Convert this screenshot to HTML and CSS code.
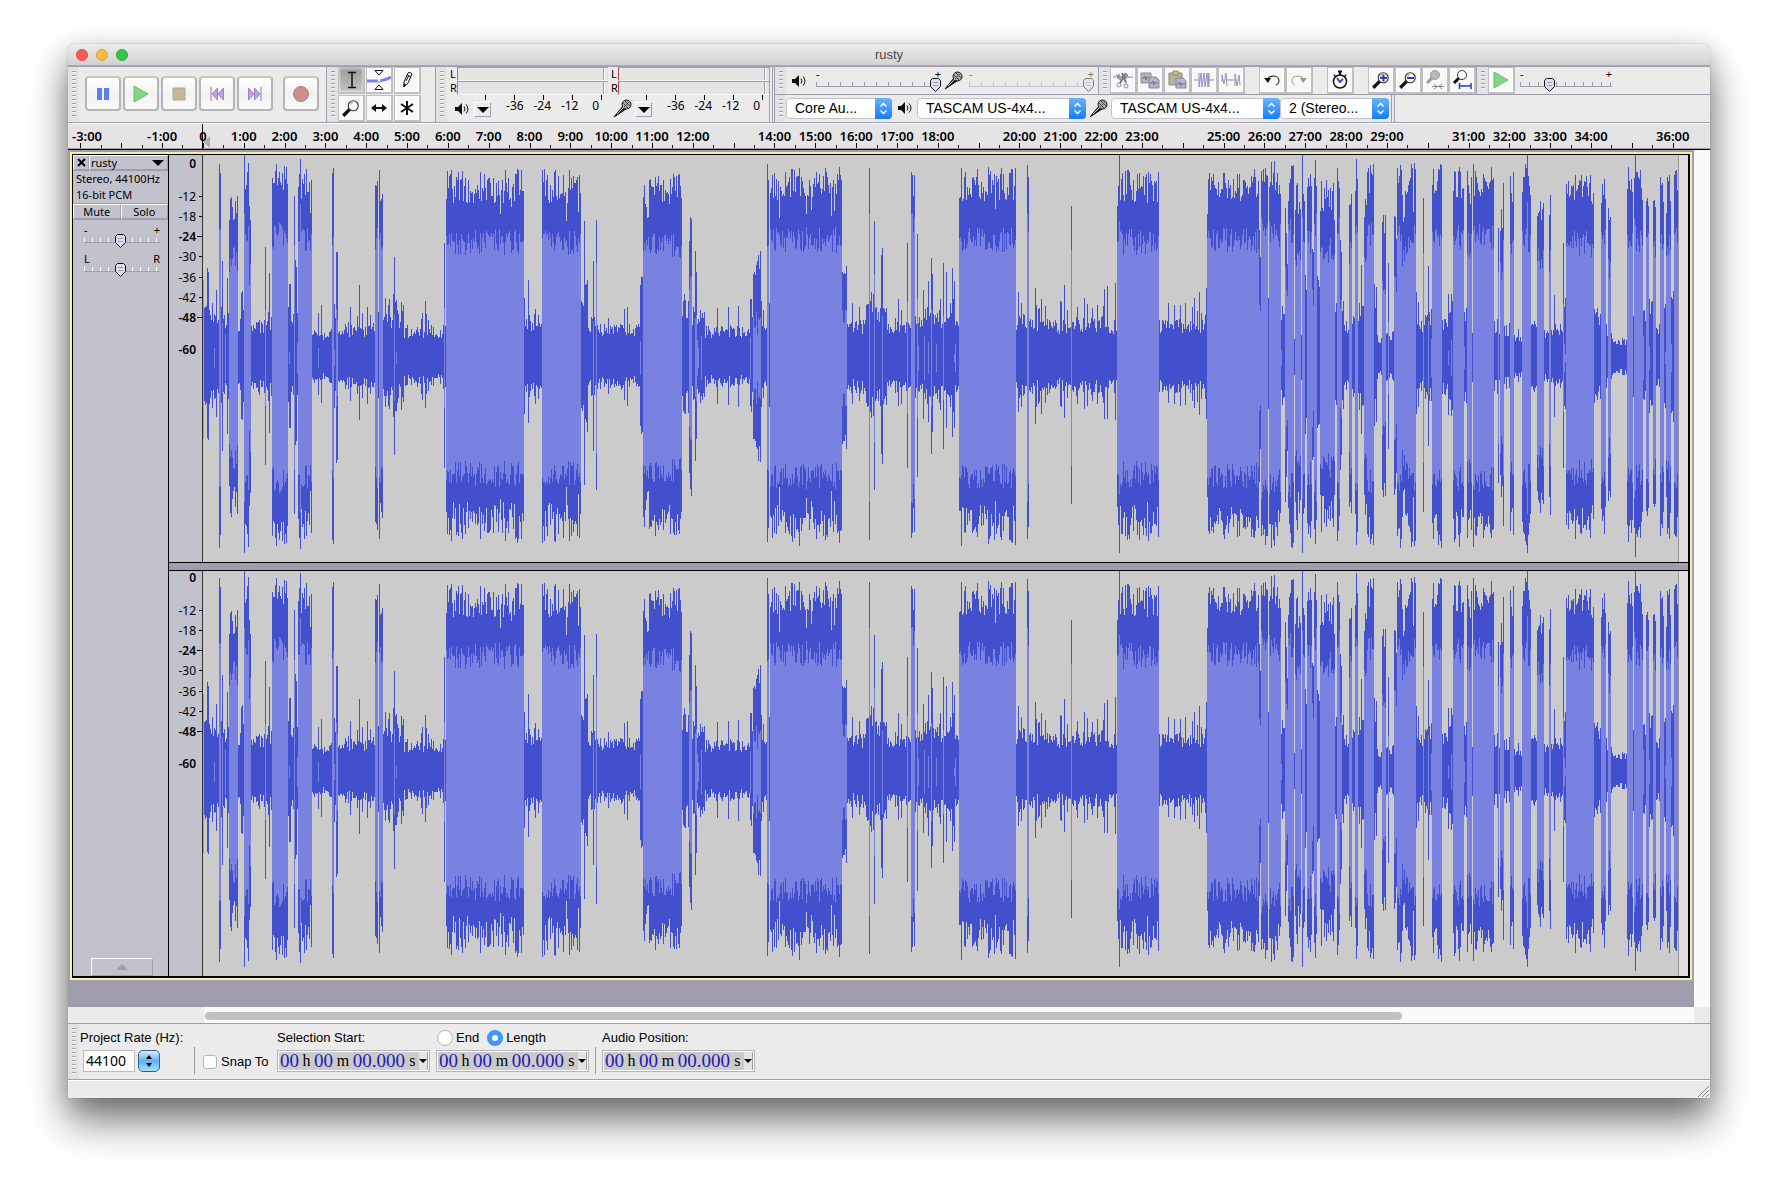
FILE: index.html
```html
<!DOCTYPE html>
<html lang="en">
<head>
  <meta charset="utf-8">
  <title>rusty</title>
  <link rel="stylesheet" href="styles.css">
</head>
<body>
  <svg class="symbols" aria-hidden="true">
    <symbol id="i-speaker" viewBox="0 0 14 12">
      <path d="M0 4h3l4-4v12L3 8H0z" fill="#111"/>
      <path d="M9 3.500q2 2.500 0 5M11 1.500q4 4.500 0 9" fill="none" stroke="#111"/>
    </symbol>
    <symbol id="i-mic" viewBox="0 0 19 19">
      <path d="M1 18L10 7l3 3z" fill="#222" stroke="#111"/>
      <circle cx="13.500" cy="5.500" r="4.500" fill="#aaa" stroke="#111"/>
      <path d="M10 4l5 5M12 2l5 5M11 8l5-5" stroke="#444" fill="none"/>
      <path d="M4 15l7-7" stroke="#ccc"/>
    </symbol>
    <symbol id="i-lens" viewBox="0 0 18 18">
      <path d="M2 16l6-6" stroke="#111" stroke-width="3"/>
      <circle cx="11" cy="7" r="4.500" fill="#fff" stroke="#333"/>
      <path d="M8.500 6q.5-2 2.500-2" fill="none" stroke="#999"/>
    </symbol>
    <symbol id="i-wave" viewBox="0 0 20 20">
      <path d="M0 10h3l1-2 1 4 1-5 1 6 1-4 1 2 1-4 1 5 1-3 1 3 1-5 1 4 1-1h4" fill="none" stroke="#8b8b98"/>
    </symbol>
  </svg>

  <main class="window">
    <header class="titlebar">
      <div class="lights">
        <button class="light red" aria-label="Close"></button>
        <button class="light yellow" aria-label="Minimize"></button>
        <button class="light green" aria-label="Zoom"></button>
      </div>
      <h1>rusty</h1>
    </header>

    <div class="toolbars">
      <div class="bar transport">
        <span class="grip"></span>
        <div class="transport-buttons">
          <button class="big" aria-label="Pause"><svg width="16" height="16"><path d="M2 2h5v12H2zM9 2h5v12H9z" fill="#5b80ee"/></svg></button>
          <button class="big" aria-label="Play"><svg width="16" height="16"><path d="M1 0l14 8-14 8z" fill="#83d683" stroke="#6fba72"/></svg></button>
          <button class="big" aria-label="Stop"><svg width="16" height="16"><path d="M2 2h12v12H2z" fill="#c3b69b" stroke="#b5a88c"/></svg></button>
          <button class="big" aria-label="Skip to start"><svg width="16" height="16"><path d="M2 1v14" stroke="#8f7aa8"/><path d="M8.500 2v12L3 8zM14.500 2v12L9 8z" fill="#bfa1e3" stroke="#9d83bc"/></svg></button>
          <button class="big" aria-label="Skip to end"><svg width="16" height="16"><path d="M14 1v14" stroke="#8f7aa8"/><path d="M1.500 2v12L7 8zM7.500 2v12L13 8z" fill="#bfa1e3" stroke="#9d83bc"/></svg></button>
          <button class="big record" aria-label="Record"><svg width="16" height="16"><circle cx="8" cy="8" r="7.500" fill="#cc8f90" stroke="#b27c7e"/></svg></button>
        </div>
      </div>

      <div class="bar tools">
        <span class="grip"></span>
        <div class="tool-grid">
          <button class="tool pressed" aria-label="Selection tool"><svg width="20" height="20"><path d="M7 2.500h3.500l.5.5.5-.5H15M7 17.500h3.500l.5-.5.5.5H15M11 3v14" fill="none" stroke="#111" stroke-width="1.500"/></svg></button>
          <button class="tool" aria-label="Envelope tool"><svg width="24" height="22"><path d="M0 12h10q6 0 14-4" fill="none" stroke="#7982e0" stroke-width="3"/><path d="M8 1.500h8L12 6zM8 20.500h8L12 16z" fill="#fff" stroke="#111"/><circle cx="12" cy="11" r="1.500" fill="#fff"/></svg></button>
          <button class="tool" aria-label="Draw tool"><svg width="20" height="20"><path d="M7 17l0-5 4-9q2-2 4 1l-4 9z" fill="#fff" stroke="#111"/><path d="M7 17v-3l2 1zM10 5l4 2M9 11l3-6" stroke="#111" fill="#111"/></svg></button>
          <button class="tool" aria-label="Zoom tool"><svg width="20" height="20"><use href="#i-lens"/></svg></button>
          <button class="tool" aria-label="Time shift tool"><svg width="20" height="20"><path d="M3 10h14" stroke="#111" stroke-width="2"/><path d="M2 10l5-4v8zM18 10l-5-4v8z" fill="#111"/></svg></button>
          <button class="tool" aria-label="Multi tool"><svg width="20" height="20"><path d="M10 3v14M4 6l12 8M16 6L4 14" stroke="#111" stroke-width="2"/></svg></button>
        </div>
      </div>

      <div class="bar meters">
        <span class="grip"></span>
        <div class="meter playback">
          <div class="level"><span>L</span><i></i></div>
          <div class="level"><span>R</span><i></i></div>
          <div class="scale">
            <svg width="14" height="12"><use href="#i-speaker"/></svg>
            <button class="drop" aria-label="Playback meter options"></button>
            <span>-36</span><span>-24</span><span>-12</span><span class="zero">0</span>
          </div>
        </div>
        <div class="meter recording">
          <div class="level"><span>L</span><i></i></div>
          <div class="level"><span>R</span><i></i></div>
          <div class="scale">
            <svg class="mic" width="19" height="19"><use href="#i-mic"/></svg>
            <button class="drop" aria-label="Recording meter options"></button>
            <span>-36</span><span>-24</span><span>-12</span><span class="zero">0</span>
          </div>
        </div>
      </div>

      <div class="stack">
        <div class="row">
          <div class="bar mixer">
            <span class="grip"></span>
            <svg class="speaker" width="14" height="12"><use href="#i-speaker"/></svg>
            <label class="slider"><span>-</span><span>+</span><input type="range" value="100" aria-label="Playback volume"></label>
            <svg class="mic" width="19" height="19"><use href="#i-mic"/></svg>
            <label class="slider off"><span>-</span><span>+</span><input type="range" value="100" aria-label="Recording volume" disabled></label>
          </div>
          <div class="bar edit">
            <span class="grip"></span>
            <button class="tool" aria-label="Cut"><svg width="20" height="20"><use href="#i-wave" y="-3"/><path d="M7 13L13 3M13 13L9 3" stroke="#777" stroke-width="2"/><circle cx="6" cy="15" r="2" fill="none" stroke="#8a8ab5"/><circle cx="13" cy="16" r="2" fill="none" stroke="#8a8ab5"/></svg></button>
            <button class="tool" aria-label="Copy"><svg width="20" height="20"><path d="M1 3h10v10H1z" fill="#b5b5b5" stroke="#8f8f8f"/><path d="M9 7h7l3 3v8H9z" fill="#b4b4cb" stroke="#8484a4"/><path d="M2 8h2l1-2 1 4 1-3 1 1M10 13h2l1-2 1 4 1-3 1 1h2" fill="none" stroke="#777"/></svg></button>
            <button class="tool" aria-label="Paste"><svg width="20" height="20"><path d="M2 3h13v12H2z" fill="#b5b296" stroke="#8c8a74"/><path d="M6 1h5v4H6z" fill="#c9c478" stroke="#8c8a74"/><path d="M9 8h7l3 3v7H9z" fill="#b4b4cb" stroke="#8484a4"/><path d="M10 14h2l1-2 1 4 1-3 1 1h2" fill="none" stroke="#777"/></svg></button>
            <button class="tool" aria-label="Trim"><svg width="20" height="20"><path d="M0 10h5M15 10h5" stroke="#8b8b98"/><path d="M5 3v14l2-14 1 14L10 3l1 14 2-14 1 14 1-14v14" fill="none" stroke="#9292bd"/></svg></button>
            <button class="tool" aria-label="Silence"><svg width="20" height="20"><path d="M1 12V5l2 9 2-11 1 13M14 16V4l2 12 2-11 1 10" fill="none" stroke="#9292bd"/><path d="M6 10h8" stroke="#8b8b98"/></svg></button>
            <button class="tool gap" aria-label="Undo"><svg width="20" height="20"><path d="M5 10q1-4 6-4 6 0 6 5 0 3-3 4" fill="none" stroke="#111"/><path d="M2 8l4 5 3-5z" fill="#111"/></svg></button>
            <button class="tool" aria-label="Redo"><svg width="20" height="20"><path d="M15 10q-1-4-6-4-6 0-6 5 0 3 3 4" fill="none" stroke="#999"/><path d="M18 8l-4 5-3-5z" fill="#999"/></svg></button>
            <button class="tool gap" aria-label="Sync-lock"><svg width="20" height="20"><circle cx="10" cy="11.500" r="6.500" fill="#fff" stroke="#111" stroke-width="1.500"/><path d="M8 1.500h4M10 1v4M15 5l1 1M4 5l1 1" stroke="#111" stroke-width="2"/><path d="M7 8l3 4 3-3" fill="none" stroke="#3546c5" stroke-width="2"/></svg></button>
            <button class="tool gap" aria-label="Zoom in"><svg width="20" height="20"><use href="#i-lens"/><path d="M9 8h7M12.500 4.500v7" stroke="#2b3bb0" stroke-width="2"/></svg></button>
            <button class="tool" aria-label="Zoom out"><svg width="20" height="20"><use href="#i-lens"/><path d="M9 8h7" stroke="#2b3bb0" stroke-width="2"/></svg></button>
            <button class="tool" aria-label="Fit selection"><svg width="20" height="20"><path d="M2 13l5-5" stroke="#999" stroke-width="3"/><circle cx="10" cy="5" r="4.500" fill="#bbb" stroke="#999"/><path d="M7 16.500h12M9 14l3 2.500L9 19M17 14l-3 2.500 3 2.500" fill="none" stroke="#888"/></svg></button>
            <button class="tool" aria-label="Fit project"><svg width="20" height="20"><path d="M2 13l5-5" stroke="#111" stroke-width="3"/><circle cx="10" cy="5" r="4.500" fill="#fff" stroke="#333"/><path d="M7.500 13v6M19 13v6M8 16h11" stroke="#2b3bb0" stroke-width="1.500"/></svg></button>
          </div>
          <div class="bar transcription">
            <span class="grip"></span>
            <button class="tool" aria-label="Play at speed"><svg width="16" height="16"><path d="M1 0l14 8-14 8z" fill="#83d683" stroke="#6fba72"/></svg></button>
            <label class="slider speed"><span>-</span><span>+</span><input type="range" value="30" aria-label="Playback speed"></label>
          </div>
        </div>
        <div class="row">
          <div class="bar device">
            <span class="grip"></span>
            <span class="select host"><select aria-label="Audio host"><option>Core Au...</option></select></span>
            <svg class="speaker" width="14" height="12"><use href="#i-speaker"/></svg>
            <span class="select out"><select aria-label="Output device"><option>TASCAM US-4x4...</option></select></span>
            <svg class="mic" width="19" height="19"><use href="#i-mic"/></svg>
            <span class="select out"><select aria-label="Input device"><option>TASCAM US-4x4...</option></select></span>
            <span class="select channels"><select aria-label="Input channels"><option>2 (Stereo...</option></select></span>
          </div>
          <span class="bar-end"></span>
        </div>
      </div>
    </div>

    <div class="timeline">
      <div class="minutes" id="minutes"></div>
      <span class="playhead"></span>
    </div>

    <div class="workspace">
      <section class="track">
        <aside class="panel">
          <div class="track-title">
            <button class="close" aria-label="Close track"><svg width="9" height="9"><path d="M1 1l7 7M8 1L1 8" stroke="#000" stroke-width="2"/></svg></button>
            <button class="name">rusty<i></i></button>
          </div>
          <p class="format">Stereo, 44100Hz<br>16-bit PCM</p>
          <div class="mute-solo"><button>Mute</button><button>Solo</button></div>
          <label class="slider wide"><span>-</span><span>+</span><input type="range" value="48" aria-label="Gain"></label>
          <label class="slider wide pan"><span>L</span><span>R</span><input type="range" value="48" aria-label="Pan"></label>
          <button class="collapse" aria-label="Collapse track"><i></i></button>
        </aside>
        <div class="channels-view">
          <div class="channel">
            <div class="db">
              <b class="top">0</b><div class="steps"><span>-12</span><span>-18</span><b>-24</b><span>-30</span><span>-36</span><span>-42</span><b>-48</b></div><b class="floor">-60</b>
            </div>
            <svg class="wave" viewBox="0 0 1485 407" preserveAspectRatio="none"></svg>
          </div>
          <div class="channel">
            <div class="db">
              <b class="top">0</b><div class="steps"><span>-12</span><span>-18</span><b>-24</b><span>-30</span><span>-36</span><span>-42</span><b>-48</b></div><b class="floor">-60</b>
            </div>
            <svg class="wave" viewBox="0 0 1485 407" preserveAspectRatio="none"></svg>
          </div>
        </div>
      </section>
      <div class="vscroll"></div>
    </div>
    <div class="hscroll"><div class="rail"><i></i></div></div>

    <footer class="selection">
      <span class="grip"></span>
      <div class="field rate">
        <label for="rate">Project Rate (Hz):</label>
        <div class="line"><input id="rate" type="text" value="44100"><button class="stepper" aria-label="Choose rate"><svg width="8" height="14"><path d="M1 5h6L4 1zM1 9h6l-3 4z"/></svg></button></div>
      </div>
      <span class="divider"></span>
      <label class="snap"><input type="checkbox"> Snap To</label>
      <div class="field">
        <span class="caption">Selection Start:</span>
        <div class="time"><input value="00" aria-label="Start hours"><span>h</span><input value="00" aria-label="Start minutes"><span>m</span><input class="sec" value="00.000" aria-label="Start seconds"><span>s</span><button aria-label="Start format"></button></div>
      </div>
      <div class="field">
        <div class="caption radios"><label><input type="radio" name="mode"> End</label><label><input type="radio" name="mode" checked> Length</label></div>
        <div class="time"><input value="00" aria-label="Length hours"><span>h</span><input value="00" aria-label="Length minutes"><span>m</span><input class="sec" value="00.000" aria-label="Length seconds"><span>s</span><button aria-label="Length format"></button></div>
      </div>
      <span class="divider tight"></span>
      <div class="field">
        <span class="caption">Audio Position:</span>
        <div class="time"><input value="00" aria-label="Position hours"><span>h</span><input value="00" aria-label="Position minutes"><span>m</span><input class="sec" value="00.000" aria-label="Position seconds"><span>s</span><button aria-label="Position format"></button></div>
      </div>
    </footer>
    <div class="status"><svg width="12" height="12"><path d="M1 12L12 1M5 12l7-7M9 12l3-3" stroke="#888"/></svg></div>
  </main>
  <script src="track.js"></script>
</body>
</html>
```
FILE: styles.css
```css
* {
  box-sizing: border-box;
}

body {
  margin: 0;
  padding: 44px 68px 93px;
  background: #fff;
  font-family: "Liberation Sans", Arial, sans-serif;
  font-size: 13px;
  color: #000;
}

button, input, select {
  font: inherit;
  color: inherit;
  margin: 0;
  padding: 0;
  border: 0;
  outline: none;
}

svg {
  display: block;
  flex: none;
}

.symbols {
  position: absolute;
  width: 0;
  height: 0;
}

.window {
  background: #ebebeb;
  border-radius: 6px 6px 0 0;
  box-shadow: 0 0 1px rgba(0, 0, 0, 0.5), 0 24px 40px rgba(0, 0, 0, 0.5), 0 6px 24px rgba(0, 0, 0, 0.2);
}

/* title bar */
.titlebar {
  position: relative;
  height: 22px;
  border-radius: 6px 6px 0 0;
  background: linear-gradient(#ececec, #d2d2d2);
  border-bottom: 1px solid #a9a9b0;
}

.titlebar h1 {
  margin: 0;
  font-size: 13px;
  font-weight: 400;
  line-height: 22px;
  text-align: center;
  color: #4a4a4a;
}

.lights {
  position: absolute;
  top: 5px;
  left: 8px;
  display: flex;
  gap: 8px;
}

.light {
  width: 12px;
  height: 12px;
  border-radius: 50%;
}

.red { background: #fc5b57; border: 1px solid #df4744; }
.yellow { background: #fdbc40; border: 1px solid #de9f34; }
.green { background: #34c84a; border: 1px solid #27aa35; }

/* toolbars */
.toolbars {
  display: flex;
  height: 57px;
  border-top: 1px solid #a09eae;
  border-bottom: 1px solid #a09eae;
}

.bar {
  display: flex;
  align-items: center;
  border-right: 1px solid #a09eae;
}

.grip {
  flex: none;
  align-self: stretch;
  width: 11px;
  border: solid #e2e2e2;
  border-width: 4px 3px 4px 4px;
  background: repeating-linear-gradient(#a09eae 0 1px, #f6f6f6 1px 2px, #e2e2e2 2px 4px) content-box #e2e2e2;
}

.transport-buttons {
  display: flex;
  gap: 2px;
  padding: 0 7px 2px 6px;
}

.big {
  display: grid;
  place-items: center;
  width: 36px;
  height: 35px;
  border: 2px solid #b5b5b5;
  border-top-color: #c8c8c8;
  border-radius: 4px;
  background: linear-gradient(#fff, #f2f2f2 50%, #fafafa);
}

.record {
  margin-left: 8px;
}

.tool-grid {
  display: grid;
  grid-template-columns: repeat(3, 27px);
  gap: 1px;
  margin-right: 14px;
}

.tool {
  display: grid;
  place-items: center;
  width: 27px;
  height: 27px;
  border: solid #c0c0c0;
  border-width: 1px 2px 2px 1px;
  background: #f8f8f8;
  box-shadow: inset 0 0 3px #fff;
}

.pressed {
  background: linear-gradient(#999, #c4c4c4);
}

.meters {
  align-items: flex-start;
  border-right: 4px double #a09eae;
}

.meter {
  width: 161px;
  padding-left: 3px;
}

.level {
  display: flex;
  height: 14px;
  font: 11px/14px "Noto Sans", sans-serif;
}

.level span {
  width: 7px;
}

.level i {
  flex: 1;
  border-top: 1px solid #a09eae;
  border-left: 1px solid #4caf50;
  border-bottom: 1px solid #f8f8f8;
  background: linear-gradient(to left, #e4e4e4 3px, #fff 3px 4px, #a09eae 4px 5px, #e4e4e4 5px);
}

.recording .level i {
  border-left-color: #b04444;
}

.scale {
  display: flex;
  align-items: center;
  height: 27px;
  margin-left: 7px;
  background: repeating-linear-gradient(to right, transparent 0 28px, #000 28px 29px) 0 0 / 146px 5px no-repeat;
  font: 12px/14px "Noto Sans", sans-serif;
}

.scale span {
  width: 29px;
  padding-bottom: 5px;
  text-align: center;
}

.scale .zero {
  width: 26px;
}

.scale svg {
  margin-left: -2px;
}

.scale .mic {
  margin: 0 -2px 0 -5px;
}

.drop {
  width: 18px;
  height: 15px;
  margin: 2px 10px 0 5px;
  border: 1px solid;
  border-color: #fff #a09eae #a09eae #fff;
  background: #ebebeb;
}

.drop::after {
  content: "";
  display: block;
  margin: 1px auto 0;
  width: 0;
  border: solid transparent;
  border-width: 6px 6px 0;
  border-top-color: #000;
}

.stack {
  flex: 1;
  margin-left: 1px;
  border-left: 1px solid #a09eae;
}

.row {
  display: flex;
  height: 28px;
}

.row:first-child {
  border-bottom: 1px solid #a09eae;
}

.mixer {
  width: 324px;
}

.speaker {
  margin: 0 5px 0 6px;
}

.mixer .speaker {
  margin-right: 10px;
}

.mixer .mic {
  margin: 0 6px 0 3px;
}

.gap {
  margin-left: 14px;
}

.transcription {
  border-right: 0;
}

.transcription .slider {
  margin-left: 5px;
}

.bar-end {
  width: 3px;
  border-right: 1px solid #a09eae;
}

/* small ticked sliders */
.slider {
  display: flex;
  flex: none;
  flex-wrap: wrap;
  justify-content: space-between;
  width: 125px;
  height: 25px;
  font: 11px/11px "Noto Sans", sans-serif;
}

.slider input {
  appearance: none;
  width: 100%;
  height: 14px;
  margin-top: -2px;
  background:
    linear-gradient(#a09eae, #a09eae) 0 8px / 100% 1px no-repeat,
    repeating-linear-gradient(to right, #a09eae 0 1px, transparent 1px 12px) 0 4px / 100% 4px no-repeat;
}

.slider input::-webkit-slider-thumb {
  appearance: none;
  width: 11px;
  height: 14px;
  background: url("data:image/svg+xml,%3Csvg xmlns='http://www.w3.org/2000/svg' width='11' height='14'%3E%3Cpath d='M2.500 .5h6l2 2v6l-5 5-5-5v-6z' fill='%23dcdcee' stroke='%23111'/%3E%3Cpath d='M3 4.500h5M3 7.500h5' stroke='%23a09eae'/%3E%3C/svg%3E");
}

.off {
  opacity: 0.5;
}

.speed {
  width: 92px;
}

.speed input {
  background:
    linear-gradient(#a09eae, #a09eae) 0 8px / 100% 1px no-repeat,
    repeating-linear-gradient(to right, #a09eae 0 1px, transparent 1px 9px) 0 4px / 100% 4px no-repeat;
}

/* drop-downs */
.select {
  position: relative;
  height: 21px;
}

.select select {
  appearance: none;
  width: 100%;
  height: 21px;
  padding-left: 8px;
  border: 1px solid #c4c4c4;
  border-radius: 4px;
  background: #fff;
  font-size: 14px;
}

.select::after {
  content: "";
  position: absolute;
  top: 0;
  right: 0;
  width: 17px;
  height: 21px;
  border-radius: 0 4px 4px 0;
  background: url("data:image/svg+xml,%3Csvg xmlns='http://www.w3.org/2000/svg' width='17' height='21'%3E%3Cpath d='M5.500 8.500l3-3 3 3M5.500 12.500l3 3 3-3' fill='none' stroke='white' stroke-width='1.500'/%3E%3C/svg%3E"), linear-gradient(#6bb3fa, #147dfb);
  pointer-events: none;
}

.host { width: 106px; }
.out { width: 169px; }
.channels { width: 109px; }

.device {
  padding: 0 2px 2px 0;
}

.device .mic {
  margin: 0 3px;
}

/* time ruler */
.timeline {
  position: relative;
  height: 27px;
  padding-right: 17px;
  overflow: hidden;
  background: #e4e4e4;
  border-bottom: 1px solid #000;
  box-shadow: inset 0 1px #fff, inset 0 -1px #a09eae;
}

.minutes {
  display: flex;
  height: 25px;
  margin-left: -8px;
}

.minute {
  position: relative;
  flex: 1 0 0;
  min-width: 0;
  text-align: center;
  white-space: nowrap;
  font: 600 13px/26px "Noto Sans", sans-serif;
}

.minute:first-child {
  text-indent: 12px;
}

.minute::before, .minute::after {
  content: "";
  position: absolute;
  bottom: 0;
  width: 1px;
  background: #000;
}

.minute::before {
  left: 0;
  height: 3px;
}

.minute::after {
  left: 50%;
  height: 5px;
}

.playhead {
  position: absolute;
  top: 1px;
  left: 134px;
  height: 26px;
  border-left: 1px solid #000;
}

.playhead::after {
  content: "";
  position: absolute;
  top: 12px;
  left: 0;
  border: solid transparent;
  border-width: 6px 7px 6px 0;
  border-right-color: rgba(140, 140, 140, 0.6);
}

/* track */
.workspace {
  display: flex;
  background: #a09eae;
}

.track {
  display: flex;
  flex: 1;
  margin: 4px 4px 29px;
  border: 1px solid #000;
  border-width: 1px 2px 2px 1px;
  outline: 2px solid #f7f29a;
}

.vscroll {
  width: 16px;
  background: #fafafa;
}

.panel {
  display: flex;
  flex-direction: column;
  width: 96px;
  border-right: 1px solid #000;
  background: #c2c2cd;
  font: 11px/16px "Noto Sans", sans-serif;
}

.track-title, .mute-solo {
  display: flex;
  height: 16px;
  border-bottom: 1px solid #a09eae;
}

.panel button {
  background: none;
  border: 1px solid;
  border-color: #fff #a09eae #a09eae #fff;
}

.close {
  display: grid;
  place-items: center;
  width: 16px;
}

.panel .name {
  display: flex;
  flex: 1;
  align-items: center;
  justify-content: space-between;
  padding: 0 3px 0 1px;
  line-height: 13px;
}

.name i {
  border: solid transparent;
  border-width: 6px 6px 0;
  border-top-color: #000;
}

.format {
  margin: 0;
  height: 33px;
  padding-left: 3px;
  border-bottom: 1px solid #a09eae;
}

.mute-solo button {
  flex: 1;
  line-height: 12px;
}

.wide {
  width: 76px;
  margin: 4px 0 0 11px;
}

.wide input {
  margin-top: -3px;
  background:
    linear-gradient(#a09eae, #a09eae) 0 8px / 100% 1px no-repeat,
    repeating-linear-gradient(to right, #fff 0 1px, transparent 1px 8px) 0 4px / 100% 4px no-repeat;
}

.collapse {
  display: grid;
  place-items: center;
  width: 62px;
  height: 18px;
  margin: auto 0 0 18px;
}

.collapse i {
  border: solid transparent;
  border-width: 0 6px 6px;
  border-bottom-color: #a09eae;
}

.channels-view {
  flex: 1;
}

.channel {
  display: flex;
  height: 407px;
}

.channel + .channel {
  margin-top: 7px;
  position: relative;
}

.channel + .channel::before {
  content: "";
  position: absolute;
  left: 0;
  right: 0;
  top: -7px;
  height: 7px;
  border: solid #000;
  border-width: 1px 0;
  background: #a09eae;
}

.db {
  width: 34px;
  padding-top: 1px;
  border-right: 1px solid #333;
  background: #c2c2cd;
  font: 12px/15px "Noto Sans", sans-serif;
  text-align: right;
}

.db b {
  font-weight: 600;
}

.db .top, .db .floor {
  display: block;
  padding-right: 6px;
}

.steps {
  display: grid;
  grid-template-rows: repeat(7, 1fr);
  height: 142px;
  margin: 15px 0 14px;
  align-items: center;
}

.steps > * {
  padding-right: 6px;
  background: linear-gradient(#000, #000) right center / 3px 1px no-repeat;
}

.steps > b {
  background-size: 5px 1px;
}

.wave {
  flex: 1;
  min-width: 0;
  height: 407px;
  background: #dedede;
}

/* scroll bar */
.hscroll {
  height: 16px;
  padding: 0 16px 0 136px;
}

.rail {
  height: 16px;
  padding: 5px 0 0 1px;
  background: #fafafa;
}

.rail i {
  display: block;
  width: 80.4%;
  height: 8px;
  border-radius: 4px;
  background: #c1c1c1;
}

/* selection toolbar */
.selection {
  display: flex;
  align-items: center;
  height: 57px;
  border-top: 1px solid #a09eae;
  border-bottom: 1px solid #a09eae;
}

.field {
  display: flex;
  flex-direction: column;
  gap: 2px;
  margin-right: 6px;
  padding-bottom: 4px;
}

.field > label, .caption {
  height: 20px;
  line-height: 20px;
}

.rate {
  width: 114px;
  margin: 0 0 0 1px;
}

.line {
  display: flex;
  gap: 3px;
  padding-left: 3px;
}

.line input {
  width: 52px;
  height: 22px;
  padding-left: 2px;
  border: 1px solid #bbb;
  background: #fff;
  font: 14px "Noto Sans", sans-serif;
}

.stepper {
  display: grid;
  place-items: center;
  width: 22px;
  height: 22px;
  border: 1px solid #3a5b94;
  border-radius: 5px;
  background: linear-gradient(#dcefff, #62aef2 50%, #a6e4ff);
}

.divider {
  width: 1px;
  height: 27px;
  margin: 18px 8px 0 0;
  background: #999;
}

.tight {
  margin-right: 6px;
}

.snap {
  display: flex;
  align-items: center;
  gap: 4px;
  width: 74px;
  margin-top: 20px;
}

.snap input {
  appearance: none;
  width: 14px;
  height: 14px;
  border: 1px solid #b5b5b5;
  border-radius: 3px;
  background: #fff;
}

.radios {
  display: flex;
  gap: 8px;
  padding-left: 1px;
}

.radios label {
  display: flex;
  align-items: center;
  gap: 3px;
}

.radios input {
  appearance: none;
  width: 16px;
  height: 16px;
  border: 1px solid #b5b5b5;
  border-radius: 50%;
  background: #fff;
}

.radios input:checked {
  border: 5px solid #3f97f8;
}

.time {
  display: flex;
  align-items: center;
  width: 153px;
  height: 22px;
  padding: 1px 1px 1px 2px;
  border: 1px solid #b5b5b5;
  box-shadow: inset 0 0 0 1px #fff;
  background: #cbcbcb;
  font: 16px/18px "Liberation Serif", serif;
}

.time input {
  flex: none;
  width: 19px;
  height: 18px;
  background: none;
  color: #1b1bb4;
  font-size: 19px;
}

.time .sec {
  width: 53px;
}

.time span {
  flex: 1 0 auto;
  text-align: center;
}

.time button {
  flex: none;
  width: 9px;
  height: 18px;
  border-right: 1px solid #a09eae;
  background: #e4e4e4;
}

.time button::after {
  content: "";
  display: block;
  width: 0;
  border: solid transparent;
  border-width: 4px 4px 0;
  border-top-color: #000;
}

.status {
  display: flex;
  justify-content: flex-end;
  align-items: flex-end;
  height: 18px;
  padding: 1px;
  border-top: 1px solid #fff;
}
```
FILE: track.js
```js
const unlabelled = [-2, 13, 19, 24, 30, 35];
const minutes = document.getElementById('minutes');

for (let m = -3; m <= 36; m++) {
  const cell = document.createElement('div');
  cell.className = 'minute';
  if (!unlabelled.includes(m)) {
    cell.textContent = m === 0 ? '0' : m + ':00';
  }
  minutes.appendChild(cell);
}

// start column, peak height; each run lasts until the next one
const runs = [
  [0, 48], [13, 85], [14, 40], [16, 180], [18, 45], [19, 97], [20, 40], [26, 155], [35, 35], [38, 58],
  [41, 203], [42, 178], [46, 138], [48, 34], [62, 111], [63, 36], [69, 178], [85, 45], [91, 162], [92, 85],
  [94, 45], [95, 180], [97, 199], [98, 174], [109, 24], [115, 58], [116, 25], [129, 178], [131, 50], [133, 95],
  [135, 28], [156, 76], [157, 28], [167, 53], [168, 32], [172, 176], [175, 40], [176, 172], [180, 38], [191, 101],
  [192, 60], [195, 38], [198, 58], [201, 27], [241, 115], [242, 34], [243, 172], [321, 38], [339, 172], [378, 68],
  [385, 35], [390, 97], [391, 40], [393, 138], [394, 30], [437, 70], [440, 168], [479, 55], [486, 130], [489, 45],
  [492, 98], [494, 45], [500, 28], [525, 60], [526, 28], [535, 58], [536, 28], [547, 55], [550, 90], [558, 38],
  [564, 178], [566, 75], [567, 174], [639, 95], [644, 33], [664, 60], [666, 190], [667, 60], [671, 137], [672, 45],
  [679, 110], [680, 45], [684, 34], [695, 75], [696, 34], [704, 115], [705, 34], [708, 188], [712, 45], [714, 124],
  [715, 42], [728, 100], [729, 42], [740, 95], [741, 42], [756, 174], [813, 38], [824, 195], [826, 34], [832, 62],
  [834, 34], [857, 75], [859, 34], [868, 152], [869, 36], [901, 70], [902, 34], [914, 165], [916, 203], [917, 172],
  [956, 33], [1004, 174], [1056, 115], [1058, 187], [1065, 60], [1066, 180], [1078, 50], [1082, 150], [1083, 125],
  [1085, 184], [1091, 22], [1092, 158], [1098, 22], [1099, 203], [1100, 168], [1102, 80], [1104, 170], [1109, 115],
  [1111, 188], [1114, 80], [1117, 164], [1132, 60], [1134, 186], [1137, 115], [1139, 35], [1146, 160], [1149, 40],
  [1152, 190], [1155, 48], [1161, 150], [1164, 180], [1171, 65], [1174, 20], [1179, 130], [1183, 22], [1185, 95],
  [1186, 24], [1191, 130], [1194, 176], [1199, 152], [1202, 165], [1205, 178], [1213, 35], [1220, 160], [1221, 45],
  [1225, 92], [1226, 42], [1229, 180], [1239, 36], [1245, 55], [1250, 176], [1261, 50], [1264, 170], [1269, 22],
  [1270, 178], [1291, 34], [1295, 130], [1296, 32], [1297, 140], [1300, 175], [1301, 30], [1307, 170], [1311, 20],
  [1319, 178], [1324, 203], [1325, 172], [1328, 34], [1334, 155], [1341, 26], [1346, 155], [1348, 30], [1351, 70],
  [1352, 30], [1360, 115], [1361, 60], [1363, 170], [1391, 40], [1398, 175], [1403, 30], [1405, 145], [1408, 17],
  [1424, 174], [1430, 50], [1431, 195], [1433, 172], [1440, 50], [1443, 170], [1446, 55], [1450, 165], [1453, 30],
  [1457, 170], [1461, 60], [1463, 168], [1468, 60], [1471, 176], [1475, 0]
];

let seed = 7;
function rand() {
  seed = (seed * 16807) % 2147483647;
  return seed / 2147483647;
}

const middle = 203;
let peaks = '';
let rms = '';

function bar(x, up, down) {
  return 'M' + x + ' ' + Math.round(middle - up) + 'h1V' + Math.round(middle + down) + 'h-1z';
}

for (let i = 0; i < runs.length - 1; i++) {
  const [start, height] = runs[i];
  const end = runs[i + 1][0];
  for (let x = start; x < end; x++) {
    let up = height;
    let down = height * 0.96;
    if (height < 90) {
      let k = 0.72 + rand() * 0.45;
      if (end - start > 5 && rand() < 0.16) k *= 1.2 + rand() * 0.9;
      up *= k;
      down *= k * (0.85 + rand() * 0.15);
    } else if (end - start > 1) {
      const k = (rand() - 0.5) * 34 - (rand() < 0.06 ? 20 : 0);
      up += k;
      down += k + (rand() - 0.5) * 10;
    }
    peaks += bar(x, Math.min(up, 203), Math.min(down, 203));
    if (height >= 90) {
      const body = Math.max(0, height - 56 + (rand() - 0.5) * 26);
      rms += bar(x, body, body);
    } else if (height >= 40 && rand() < 0.15) {
      const body = 3 + rand() * 20;
      rms += bar(x, body, body);
    }
  }
}

document.querySelectorAll('.wave').forEach(svg => {
  svg.innerHTML =
    '<path d="M0 0h1475v407H0z" fill="#cbcbcb"/>' +
    '<g shape-rendering="crispEdges">' +
    '<path d="' + peaks + '" fill="#4350cd"/>' +
    '<path d="' + rms + '" fill="#7982e0"/>' +
    '<path d="M0 125h1v159H0z" fill="#b5a52c"/>' +
    '<path d="M1475 0h1v407h-1z" fill="#999"/>' +
    '</g>';
});
```
